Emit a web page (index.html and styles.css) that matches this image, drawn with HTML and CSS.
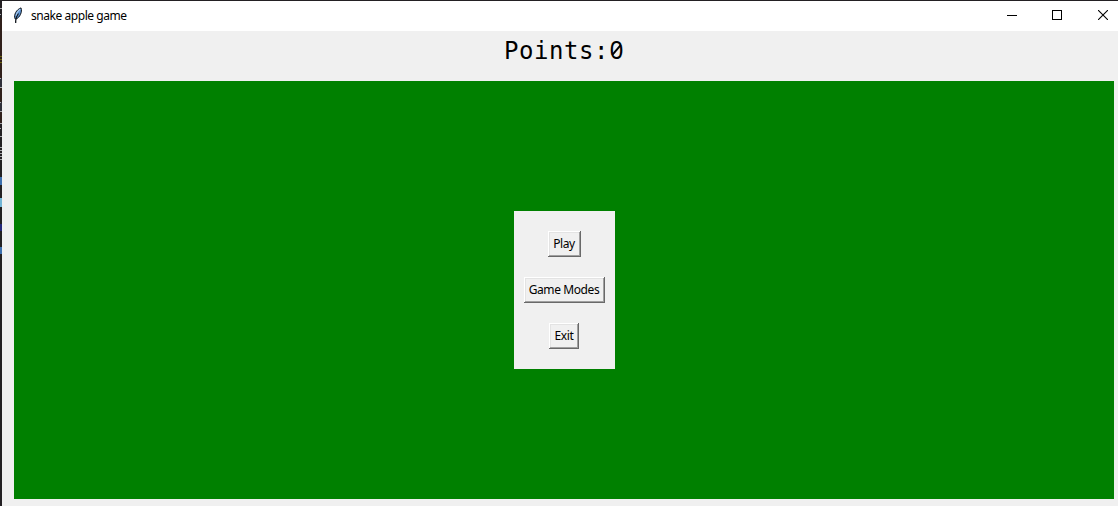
FILE: index.html
```
<!DOCTYPE html>
<html lang="en">
<head>
<meta charset="utf-8">
<title>snake apple game</title>
<link rel="stylesheet" href="styles.css">
</head>
<body>
<div class="desktop">
  <svg class="backdrop" width="2" height="506" shape-rendering="crispEdges">
    <path fill="#30201b" d="M0 18h2v60H0z"/>
    <path fill="#2f2f38" d="M0 78h2v10H0zM0 102h2v9H0z"/>
    <path fill="#30201b" d="M0 88h2v14H0zM0 111h2v12H0z"/>
    <path fill="#6b6410" d="M0 56h2v1H0zM0 59h2v1H0zM0 62h2v1H0z"/>
    <path fill="#a5a5aa" d="M0 8h2v1H0zM0 14h1v1H0zM0 78h1v1H0zM0 87h2v1H0zM0 102h1v1H0zM0 111h2v1H0zM0 123h2v1H0zM0 128h1v1H0zM0 136h2v1H0zM0 147h2v1H0zM0 150h2v1H0zM0 153h2v1H0zM0 156h2v1H0zM0 159h2v1H0z"/>
    <path fill="#3d6fae" d="M0 177h2v8H0zM0 247h2v7H0z"/>
    <path fill="#73b5d6" d="M0 198h2v9H0z"/>
    <path fill="#25287a" d="M0 224h2v7H0z"/>
  </svg>
  <div class="window">
    <header class="titlebar">
      <svg class="feather" width="12" height="17" viewBox="0 0 12 17">
        <path d="M3 11.800C1.500 8 4.300 2.500 9 .9c.8 2.200.5 4.200-.5 6.500-1 2.200-2.700 4-4.600 4.700z" fill="#5b93d3" stroke="#10151c" stroke-width="1"/>
        <path d="M4.300 9C4.500 6.200 5.800 4 8.200 2.300" fill="none" stroke="#a9c8ec" stroke-width="1.200"/>
        <path d="M3.700 16c-.3-3.500.6-6.500 2.800-9.500" fill="none" stroke="#10151c" stroke-width="1.200"/>
      </svg>
      <span class="title">snake apple game</span>
      <div class="controls">
        <svg width="10" height="10" shape-rendering="crispEdges"><path d="M0 5h10v1H0z"/></svg>
        <svg width="10" height="10" shape-rendering="crispEdges"><path d="M.5.5h9v9h-9z" fill="none" stroke="#000"/></svg>
        <svg width="10" height="10"><path d="M0 0l10 10M10 0L0 10" stroke="#000" stroke-width="1.100"/></svg>
      </div>
    </header>
    <div class="score">Points:<span class="zero">0</span></div>
    <main class="board">
      <div class="menu">
        <button class="button play">Play</button>
        <button class="button modes">Game Modes</button>
        <button class="button exit">Exit</button>
      </div>
    </main>
  </div>
</div>
</body>
</html>
```
FILE: styles.css
```
body {
  margin: 0;
  overflow: hidden;
  font-family: "Noto Sans", "Open Sans", sans-serif;
  font-size: 12px;
  color: #000;
}
.desktop {
  display: flex;
  width: 1118px;
  height: 506px;
  background: #232023;
}
.backdrop { flex: none; }
.window {
  flex: 1;
  margin-top: 1px;
  background: #f0f0f0;
}
.titlebar {
  display: flex;
  align-items: center;
  height: 30px;
  background: #fff;
}
.feather {
  margin: -2px 0 0 10px;
}
.title {
  margin: -2px 0 0 7px;
  font-size: 12px;
  letter-spacing: -0.450px;
  white-space: nowrap;
}
.controls {
  display: flex;
  gap: 36px;
  margin: -2px 10px 0 auto;
}
.controls svg:first-child { margin-right: -1px; }
.score {
  height: 50px;
  padding-left: 12px;
  padding-right: 4px;
  font: 24px/38px "DejaVu Sans Mono", monospace;
  letter-spacing: 0.550px;
  text-align: center;
  white-space: nowrap;
}
.zero {
  position: relative;
  display: inline-block;
  width: 15px;
  font-family: "Noto Sans", sans-serif;
  font-size: 24.500px;
  letter-spacing: 0;
}
.zero::after {
  content: "";
  position: absolute;
  left: 1px;
  top: 18px;
  width: 13px;
  height: 2px;
  background: #000;
  transform: rotate(-50deg);
}
.board {
  display: flex;
  align-items: center;
  justify-content: center;
  height: 418px;
  margin: 0 4px 0 12px;
  background: #008000;
}
.menu {
  display: flex;
  flex-direction: column;
  align-items: center;
  gap: 20px;
  box-sizing: border-box;
  width: 101px;
  height: 158px;
  padding: 20px 10px;
  background: #f0f0f0;
}
.button {
  flex: none;
  box-sizing: border-box;
  height: 26px;
  padding: 0;
  border: 0;
  background: #f0f0f0;
  box-shadow: inset -1px -1px #696969, inset 1px 1px #fff, inset -2px -2px #a0a0a0, inset 2px 2px #e3e3e3;
  font: 12px/26px "Noto Sans", sans-serif;
  letter-spacing: -0.400px;
  color: #000;
  white-space: nowrap;
}
.play { width: 33px; }
.modes { width: 81px; }
.exit { width: 30px; }
```
